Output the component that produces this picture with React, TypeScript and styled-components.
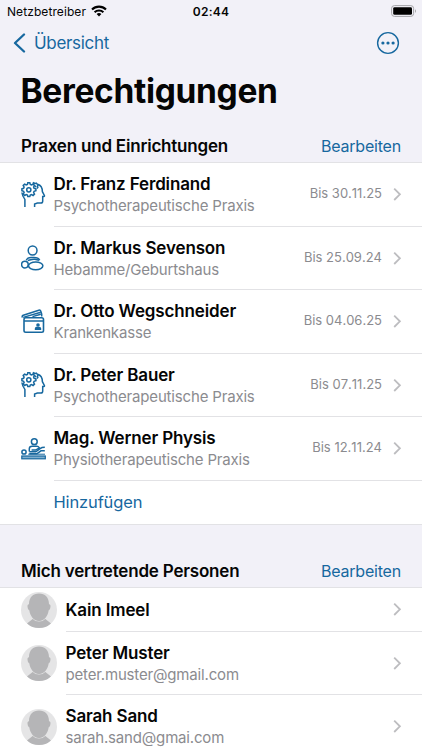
import type { ReactNode } from 'react';
import styled, { createGlobalStyle } from 'styled-components';

const theme = {
  background: '#f2f1f8',
  surface: '#ffffff',
  accent: '#17689f',
  text: '#050505',
  secondaryText: '#8b8b8f',
  separator: '#e2e2e5',
  chevron: '#bdbdc0',
};

const GlobalStyle = createGlobalStyle`
  * {
    box-sizing: border-box;
  }

  body {
    margin: 0;
    background-color: ${theme.background};
    font-family: Inter, 'Liberation Sans', sans-serif;
    color: ${theme.text};
  }

  button {
    background: none;
    border: none;
    padding: 0;
    font: inherit;
    cursor: pointer;
  }

  svg {
    display: block;
  }
`;

const Screen = styled.div`
  width: 100%;
  height: 750px;
  overflow: hidden;
  background-color: ${theme.background};
`;

const StatusBar = styled.div`
  display: grid;
  grid-template-columns: 1fr auto 1fr;
  align-items: center;
  height: 22px;
  padding: 0 7px;
  font-size: 12px;
`;

const Carrier = styled.div`
  display: flex;
  align-items: center;
  gap: 5px;
  letter-spacing: 0.08px;
`;

const Time = styled.div`
  font-weight: 600;
  letter-spacing: 0.25px;
`;

const Battery = styled.div`
  justify-self: end;
  margin: 0 -2px 1px 0;
`;

const NavBar = styled.header`
  display: flex;
  align-items: center;
  justify-content: space-between;
  height: 42px;
  padding: 0 22px 0 13px;
  color: ${theme.accent};
`;

const BackButton = styled.button`
  display: flex;
  align-items: center;
  gap: 8px;
  color: ${theme.accent};
  font-size: 17px;
  letter-spacing: -0.32px;
`;

const MoreButton = styled.button`
  color: ${theme.accent};
`;

const Title = styled.h1`
  height: 54px;
  margin: 0;
  padding-left: 20.5px;
  font-size: 33.5px;
  font-weight: 700;
  line-height: 54px;
  letter-spacing: -0.33px;
`;

const SectionHeader = styled.div<{ $height: number }>`
  display: flex;
  align-items: flex-end;
  justify-content: space-between;
  height: ${props => props.$height}px;
  padding: 0 21px 5px;
`;

const SectionTitle = styled.h2`
  margin: 0;
  font-size: 17px;
  font-weight: 600;
  line-height: 22px;
  letter-spacing: -0.2px;
`;

const LinkButton = styled.button<{ $small?: boolean }>`
  color: ${theme.accent};
  font-size: ${props => props.$small ? '16px' : '16.5px'};
  line-height: 22px;
  letter-spacing: ${props => props.$small ? '-0.2px' : '-0.15px'};
`;

const List = styled.div`
  background-color: ${theme.surface};
  border-top: 1px solid ${theme.separator};
  border-bottom: 1px solid ${theme.separator};
`;

const Row = styled.div<{ $height: number }>`
  display: flex;
  height: ${props => props.$height}px;
  padding-left: 21px;
`;

const Leading = styled.div<{ $width: number }>`
  display: flex;
  flex: none;
  align-items: center;
  width: ${props => props.$width}px;
`;

const RowBody = styled.div<{ $last?: boolean }>`
  display: flex;
  flex: 1;
  align-items: center;
  padding-right: 20px;
  border-bottom: ${props => props.$last ? 'none' : `1px solid ${theme.separator}`};
`;

const Texts = styled.div`
  flex: 1;
  padding-top: 1px;
  white-space: nowrap;
`;

const Name = styled.div`
  font-size: 17px;
  font-weight: 600;
  line-height: 22px;
  letter-spacing: -0.14px;
`;

const Detail = styled.div`
  color: ${theme.secondaryText};
  font-size: 15px;
  line-height: 21px;
  letter-spacing: -0.17px;
`;

const Until = styled.div`
  margin: 0 10px 2px 0;
  color: ${theme.secondaryText};
  font-size: 13px;
  font-kerning: none;
`;

const ChevronIcon = () => (
  <svg width="10" height="14" viewBox="0 0 10 14" fill="none" stroke={theme.chevron} strokeWidth="1.8">
    <path d="M2.2 1.6 7.9 7.3l-5.7 5.7" />
  </svg>
);

const WifiIcon = () => (
  <svg width="16" height="12" viewBox="0 0 16 12" fill="none" stroke="#000" strokeWidth="2.1">
    <path d="M1 4.5a10 10 0 0 1 14 0M3.6 7.3a6.3 6.3 0 0 1 8.8 0" />
    <path d="M8 11.5 5.6 9.1a3.4 3.4 0 0 1 4.8 0z" fill="#000" stroke="none" />
  </svg>
);

const BatteryIcon = () => (
  <svg width="26" height="12" viewBox="0 0 26 12">
    <rect x="0.6" y="0.6" width="22" height="10.8" rx="2.8" fill="none" stroke="#a4a4a8" />
    <rect x="2.2" y="2.2" width="18.8" height="7.6" rx="1.4" />
    <path d="M24 4.2c1.3.5 1.3 3.1 0 3.6z" fill="#a4a4a8" />
  </svg>
);

const IconBase = ({ children }: { children: ReactNode }) => (
  <svg width="26" height="28" viewBox="0 0 26 28" fill="none" stroke={theme.accent} strokeWidth="1.5">
    {children}
  </svg>
);

const HeadIcon = () => (
  <IconBase>
    <path d="M3.9 26v-7.6C2.3 16.2 1.2 14.1.9 11.5" />
    <path d="M16.6 3.2c3.5 1 4.8 4 4.8 7.5l2 3.8c.3.6 0 .9-.6 1h-1.1v4.7c0 1.2-.8 1.8-1.9 1.8h-3.4l-2.8 1V26" />
    <path d="M6.4 3.5 6.8 1.7h2l.5 1.8 1.2.5 1.6-.9 1.4 1.4-.9 1.6.5 1.2 1.8.5v2l-1.8.5-.5 1.2.9 1.6-1.4 1.4-1.6-.9-1.2.5-.5 1.5h-2l-.4-1.5-1.2-.5-1.6.9-1.4-1.4.9-1.6-.5-1.2L.9 9.8v-2l1.7-.5.5-1.2-.9-1.6 1.4-1.4 1.6.9z" />
    <circle cx="7.8" cy="8.8" r="2.1" />
    <path d="m11.7 2.6 1-.8 1.2.8 1.3-.5.9 1 .9 1-.6 1.2.4 1.2-1 .9M14 4.9l1 1" />
  </IconBase>
);

const MidwifeIcon = () => (
  <IconBase>
    <circle cx="11.6" cy="6.5" r="4.4" />
    <path d="M5.3 16.3c.7-2 2.6-2.9 5-2.9h2.5c2.5 0 5 .8 5.9 2.8" />
    <path d="M6.8 16.6c2.5-.7 4.5-1.8 6.9-1.4 1.9.3 2.7.5 4.3 1.1" />
    <circle cx="3.9" cy="20.6" r="3.3" />
    <ellipse cx="14.7" cy="21.8" rx="7.2" ry="3.9" />
  </IconBase>
);

const InsuranceIcon = () => (
  <IconBase>
    <path d="M1.5 9.5C.9 8.5 1 7.8 2.3 7.3L17.8 2.2c1.1-.3 1.7 0 2 1l.9 2.9v2.3" />
    <path d="m2.2 9.4 17.6-5.1M11.5 8.6l8.3-2.3" />
    <rect x="3" y="9.8" width="19.5" height="14.4" rx="1.7" strokeWidth="1.6" />
    <path d="M3 13h19.5" />
    <circle cx="17" cy="17" r="1.8" fill={theme.accent} stroke="none" />
    <path d="M13.8 22v-1.2c0-1.4 1-2 2.1-2h2.2c1.2 0 2.1.7 2.1 2V22z" fill={theme.accent} stroke="none" />
  </IconBase>
);

const PhysioIcon = () => (
  <IconBase>
    <circle cx="13.3" cy="6.7" r="2.9" />
    <path d="M8.3 16.4v-2.6c0-1.8 1-2.6 2.8-2.6h4.8c1.2 0 1.9.8 2.5 1.7l-3.8 2.2h-4" />
    <path d="M8.3 16.8h6.5l4.3-3.2c1-.8 2.6-1.3 4.7-1.3M8.3 18.8h7.5l4.2-3h3.8" />
    <circle cx="3" cy="17" r="2.1" />
    <path d="M7.2 19.2H24" strokeWidth="1" />
    <rect x=".8" y="21" width="23.5" height="2.8" fill="#7fafcf" strokeWidth="1.2" />
  </IconBase>
);

const Avatar = () => (
  <svg width="36" height="36" viewBox="0 0 36 36">
    <circle cx="18" cy="18" r="18" fill="#e5e5e6" />
    <path d="M6 31.4 11.6 27h12.8l5.6 4.4a18 18 0 0 1-24 0z" fill="#b5b5b7" />
    <path
      d="M18 1.6c6 0 10 4 10 10.6 1.5.1 1.7 1.4 1.4 3-.3 1.8-.8 2.7-1.7 3.1-.8 6.2-4.8 10.7-9.7 10.7s-8.9-4.5-9.7-10.7c-.9-.4-1.4-1.3-1.7-3.1-.3-1.6-.1-2.9 1.4-3C8 5.6 12 1.6 18 1.6z"
      fill="#b5b5b7"
      stroke="#e5e5e6"
      strokeWidth="1.2"
      paintOrder="stroke"
    />
  </svg>
);

const practices = [
  { name: 'Dr. Franz Ferdinand', detail: 'Psychotherapeutische Praxis', until: '30.11.25', Icon: HeadIcon },
  { name: 'Dr. Markus Sevenson', detail: 'Hebamme/Geburtshaus', until: '25.09.24', Icon: MidwifeIcon },
  { name: 'Dr. Otto Wegschneider', detail: 'Krankenkasse', until: '04.06.25', Icon: InsuranceIcon },
  { name: 'Dr. Peter Bauer', detail: 'Psychotherapeutische Praxis', until: '07.11.25', Icon: HeadIcon },
  { name: 'Mag. Werner Physis', detail: 'Physiotherapeutische Praxis', until: '12.11.24', Icon: PhysioIcon },
];

const persons = [
  { name: 'Kain Imeel' },
  { name: 'Peter Muster', detail: 'peter.muster@gmail.com' },
  { name: 'Sarah Sand', detail: 'sarah.sand@gmai.com' },
];

export default function App() {
  return (
    <Screen>
      <GlobalStyle />
      <StatusBar>
        <Carrier>
          <span>Netzbetreiber</span>
          <WifiIcon />
        </Carrier>
        <Time>02:44</Time>
        <Battery>
          <BatteryIcon />
        </Battery>
      </StatusBar>

      <NavBar>
        <BackButton>
          <svg width="13" height="20" viewBox="0 0 13 20" fill="none" stroke="currentColor" strokeWidth="2.3" strokeLinecap="round" strokeLinejoin="round">
            <path d="M11 1.5 2 10l9 8.5" />
          </svg>
          Übersicht
        </BackButton>
        <MoreButton aria-label="Mehr">
          <svg width="24" height="24" viewBox="0 0 24 24" fill="currentColor">
            <circle cx="12" cy="12" r="10.4" fill="none" stroke="currentColor" strokeWidth="1.4" />
            <circle cx="6.9" cy="12" r="1.6" />
            <circle cx="12" cy="12" r="1.6" />
            <circle cx="17.1" cy="12" r="1.6" />
          </svg>
        </MoreButton>
      </NavBar>

      <Title>Berechtigungen</Title>

      <SectionHeader $height={44}>
        <SectionTitle>Praxen und Einrichtungen</SectionTitle>
        <LinkButton $small>Bearbeiten</LinkButton>
      </SectionHeader>
      <List>
        {practices.map(({ name, detail, until, Icon }) => (
          <Row key={name} $height={63.5}>
            <Leading $width={32.5}>
              <Icon />
            </Leading>
            <RowBody>
              <Texts>
                <Name>{name}</Name>
                <Detail>{detail}</Detail>
              </Texts>
              <Until>Bis {until}</Until>
              <ChevronIcon />
            </RowBody>
          </Row>
        ))}
        <Row $height={43.5}>
          <Leading $width={32.5} />
          <RowBody $last>
            <LinkButton>Hinzufügen</LinkButton>
          </RowBody>
        </Row>
      </List>

      <SectionHeader $height={62}>
        <SectionTitle>Mich vertretende Personen</SectionTitle>
        <LinkButton $small>Bearbeiten</LinkButton>
      </SectionHeader>
      <List>
        {persons.map(({ name, detail }) => (
          <Row key={name} $height={detail ? 63.5 : 43.5}>
            <Leading $width={44.5}>
              <Avatar />
            </Leading>
            <RowBody>
              <Texts>
                <Name>{name}</Name>
                {detail && <Detail>{detail}</Detail>}
              </Texts>
              <ChevronIcon />
            </RowBody>
          </Row>
        ))}
      </List>
    </Screen>
  );
}
